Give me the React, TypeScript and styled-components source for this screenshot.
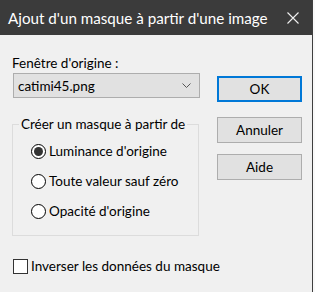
import React from "react";
import styled, { createGlobalStyle } from "styled-components";

const Global = createGlobalStyle`
  html, body { margin: 0; padding: 0; background: #f9f9f9; }
  body { font-family: Lato, "Noto Sans", sans-serif; }
  * { box-sizing: border-box; }
`;

const Window = styled.div`
  width: 313px;
  height: 292px;
  background: #f0f0f0;
  border-right: 1px solid #3f3f3f;
  display: flex;
  flex-direction: column;
  overflow: hidden;
  white-space: nowrap;
`;

const TitleBar = styled.div`
  height: 35px;
  flex-shrink: 0;
  background: #3b3b3b;
  color: #ffffff;
  display: flex;
  align-items: center;
  justify-content: space-between;
  padding: 0 13px 0 8px;
  font-size: 15.2px;
`;

const CloseIcon = styled.svg`
  width: 12px;
  height: 12px;
  display: block;
`;

const Body = styled.div`
  display: flex;
  gap: 17px;
  padding: 19px 0 0 12px;
  font-size: 13.5px;
  color: #000;
`;

const LeftCol = styled.div`
  width: 188px;
  display: flex;
  flex-direction: column;
`;

const RightCol = styled.div`
  width: 85px;
  display: flex;
  flex-direction: column;
  padding-top: 22px;
`;

const Label = styled.div`
  height: 18px;
  line-height: 18px;
`;

const Select = styled.div`
  margin: 1px 0 0 1px;
  width: 187px;
  height: 25px;
  background: #e1e1e1;
  border: 1px solid #adadad;
  display: flex;
  align-items: center;
  justify-content: space-between;
  padding: 0 8px 0 4px;
`;

const Group = styled.div`
  position: relative;
  margin-top: 26px;
  width: 187px;
  height: 112px;
  border: 1px solid #dcdcdc;
  padding: 17px 0 0 18px;
  display: flex;
  flex-direction: column;
  gap: 12px;
`;

const Legend = styled.span`
  position: absolute;
  top: -10px;
  left: 6px;
  padding: 0 2px;
  background: #f0f0f0;
  line-height: 18px;
`;

const Option = styled.div`
  display: flex;
  align-items: center;
  gap: 3px;
  height: 18px;
`;

const RadioCircle = styled.span<{ $checked?: boolean }>`
  flex-shrink: 0;
  width: 15px;
  height: 15px;
  border-radius: 50%;
  border: 1px solid #000;
  background: #fff;
  display: flex;
  align-items: center;
  justify-content: center;
  &::after {
    content: "";
    width: 9px;
    height: 9px;
    border-radius: 50%;
    background: ${(p) => (p.$checked ? "#333" : "transparent")};
  }
`;

const CheckRow = styled.div`
  margin: 22px 0 0 1px;
  display: flex;
  align-items: center;
  gap: 3px;
  height: 16px;
`;

const Box = styled.span`
  flex-shrink: 0;
  width: 15px;
  height: 15px;
  border: 1px solid #333;
  background: #fff;
`;

const Button = styled.div<{ $primary?: boolean }>`
  height: 26px;
  background: #e1e1e1;
  border: ${(p) => (p.$primary ? "2px solid #0078d7" : "1px solid #adadad")};
  display: flex;
  align-items: center;
  justify-content: center;
  margin-bottom: ${(p) => (p.$primary ? "15px" : "11px")};
`;

export default function App() {
  return (
    <>
      <Global />
      <Window>
        <TitleBar>
          <span>Ajout d'un masque à partir d'une image</span>
          <CloseIcon viewBox="0 0 12 12">
            <path d="M0.5 0.5 L11.5 11.5 M11.5 0.5 L0.5 11.5" stroke="#f0f0f0" strokeWidth="1.1" />
          </CloseIcon>
        </TitleBar>
        <Body>
          <LeftCol>
            <Label>Fenêtre d'origine :</Label>
            <Select>
              <span>catimi45.png</span>
              <svg width="9" height="5" viewBox="0 0 9 5">
                <path d="M0.5 0.5 L4.5 4.5 L8.5 0.5" stroke="#555" fill="none" strokeWidth="1" />
              </svg>
            </Select>
            <Group>
              <Legend>Créer un masque à partir de</Legend>
              <Option>
                <RadioCircle $checked />
                <span>Luminance d'origine</span>
              </Option>
              <Option>
                <RadioCircle />
                <span>Toute valeur sauf zéro</span>
              </Option>
              <Option>
                <RadioCircle />
                <span>Opacité d'origine</span>
              </Option>
            </Group>
            <CheckRow>
              <Box />
              <span>Inverser les données du masque</span>
            </CheckRow>
          </LeftCol>
          <RightCol>
            <Button $primary>OK</Button>
            <Button>Annuler</Button>
            <Button>Aide</Button>
          </RightCol>
        </Body>
      </Window>
    </>
  );
}
